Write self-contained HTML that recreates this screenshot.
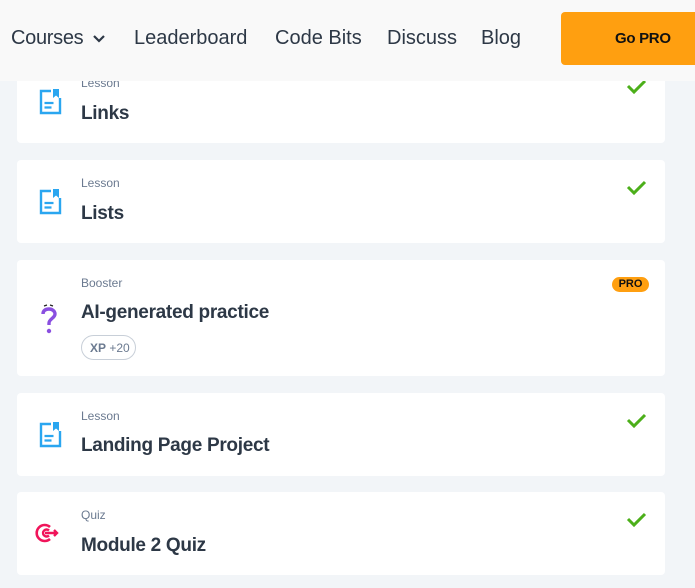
<!DOCTYPE html>
<html><head><style>
*{margin:0;padding:0;box-sizing:border-box}
body{width:695px;height:588px;background:#f2f5f8;font-family:"Liberation Sans",sans-serif;position:relative;overflow:hidden}
.hdr{position:absolute;left:0;top:0;width:695px;height:81px;background:#f9f9f9;z-index:2}
.nav{position:absolute;top:27px;font-size:20px;color:#2d3846;white-space:nowrap}
.btn{position:absolute;left:561px;top:12px;width:150px;height:53px;background:#ff9f10;border-radius:4px;font-weight:bold;font-size:15px;color:#111;padding:18px 0 0 54px;letter-spacing:-0.3px}
.card{position:absolute;left:17px;width:648px;background:#fff;border-radius:4px}
.lbl{position:absolute;left:64px;font-size:12px;color:#6b7a90}
.ttl{position:absolute;left:64px;font-size:19px;font-weight:bold;color:#2d3846;white-space:nowrap;letter-spacing:-0.3px}
.ico{position:absolute;left:21px}
.chk{position:absolute;left:609px}
</style></head><body>
<div class="hdr">
<div class="nav" style="left:11px;letter-spacing:-0.3px">Courses <svg width="14" height="10" viewBox="0 0 14 10" style="margin-left:3px"><path d="M2 2l5 5 5-5" stroke="#2d3846" stroke-width="2.2" fill="none"/></svg></div>
<div class="nav" style="left:134px">Leaderboard</div>
<div class="nav" style="left:275px">Code Bits</div>
<div class="nav" style="left:387px">Discuss</div>
<div class="nav" style="left:481px">Blog</div>
<div class="btn">Go PRO</div>
</div>

<svg width="0" height="0" style="position:absolute"><defs>
<g id="doc"><path d="M13 3H3v22h19V10" stroke="#2aa6f0" stroke-width="2.4" fill="none"/><path d="M15 1h6v9l-3-2.5L15 10z" fill="#2aa6f0"/><path d="M6.5 15h9M6.5 19.5h7" stroke="#2aa6f0" stroke-width="2.2"/></g>
<g id="ck"><path d="M2 9l6 6 11-11" stroke="#4caf1a" stroke-width="3" fill="none"/></g>
</defs></svg>

<div class="card" style="top:60px;height:83px">
<div class="lbl" style="top:16px">Lesson</div>
<div class="ttl" style="top:43px">Links</div>
<svg class="ico" style="top:28px" width="26" height="28"><use href="#doc"/></svg>
<svg class="chk" style="top:17px" width="22" height="18"><use href="#ck"/></svg>
</div>

<div class="card" style="top:160px;height:83px">
<div class="lbl" style="top:16px">Lesson</div>
<div class="ttl" style="top:43px">Lists</div>
<svg class="ico" style="top:28px" width="26" height="28"><use href="#doc"/></svg>
<svg class="chk" style="top:18px" width="22" height="18"><use href="#ck"/></svg>
</div>

<div class="card" style="top:260px;height:116px">
<div class="lbl" style="top:16px">Booster</div>
<div class="ttl" style="top:42px">AI-generated practice</div>
<div style="position:absolute;left:64px;top:75px;width:55px;height:25px;border:1px solid #c8cfd8;border-radius:13px;font-size:12px;color:#6b7a90;padding:5px 0 0 8px"><b>XP</b> +20</div>
<div style="position:absolute;left:595px;top:17px;width:37px;height:15px;background:#ff9f10;border-radius:8px;font-size:11px;font-weight:bold;color:#111;text-align:center;line-height:15px">PRO</div>
<svg class="ico" style="top:43px;left:22px" width="20" height="32" viewBox="0 0 20 32"><path d="M4 11c0-4 3-5 6-5s6 2 6 5c0 4-6 5-6 9v2" stroke="#8a4fe0" stroke-width="3.4" fill="none"/><circle cx="10" cy="28" r="2.2" fill="#8a4fe0"/><path d="M5 3l3-1M11 2l3 1" stroke="#222" stroke-width="1.2"/></svg>
</div>

<div class="card" style="top:393px;height:83px">
<div class="lbl" style="top:16px">Lesson</div>
<div class="ttl" style="top:42px">Landing Page Project</div>
<svg class="ico" style="top:28px" width="26" height="28"><use href="#doc"/></svg>
<svg class="chk" style="top:18px" width="22" height="18"><use href="#ck"/></svg>
</div>

<div class="card" style="top:492px;height:83px">
<div class="lbl" style="top:16px">Quiz</div>
<div class="ttl" style="top:43px">Module 2 Quiz</div>
<svg class="ico" style="top:30px;left:18px" width="26" height="22" viewBox="0 0 26 22"><path d="M15 5a8 8 0 1 0 0 12" stroke="#f0145a" stroke-width="2.6" fill="none"/><path d="M14 8.5a3.5 3.5 0 1 0 0 5" stroke="#f0145a" stroke-width="2.4" fill="none"/><path d="M10 11h12M19 8l3 3-3 3" stroke="#f0145a" stroke-width="2.4" fill="none"/></svg>
<svg class="chk" style="top:18px" width="22" height="18"><use href="#ck"/></svg>
</div>
</body></html>
